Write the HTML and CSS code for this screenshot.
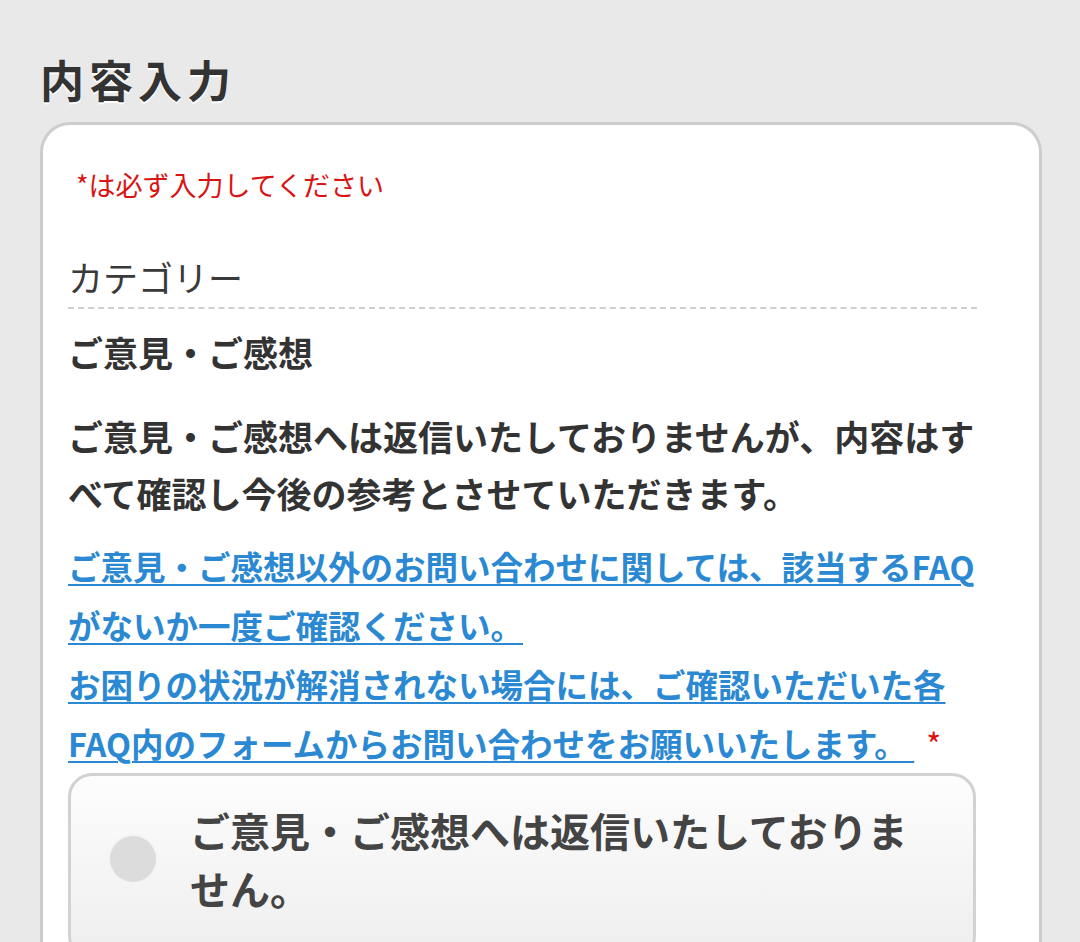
FILE: index.html
```html
<!DOCTYPE html>
<html lang="ja">
<head>
<meta charset="utf-8">
<title>内容入力</title>
<link rel="stylesheet" href="styles.css">
</head>
<body>
<div class="page">
  <h1 class="page-title">内容入力</h1>
  <div class="card">
    <p class="required-note">*は必ず入力してください</p>
    <div class="field-label">カテゴリー</div>
    <div class="field-value">ご意見・ご感想</div>
    <p class="notice">ご意見・ご感想へは返信いたしておりませんが、内容はすべて確認し今後の参考とさせていただきます。</p>
    <p class="links"><a href="#" class="link">ご意見・ご感想以外のお問い合わせに関しては、該当するFAQがないか一度ご確認ください。 </a><br><a href="#" class="link">お困りの状況が解消されない場合には、ご確認いただいた各FAQ内のフォームからお問い合わせをお願いいたします。 </a><span class="req">*</span></p>
    <label class="radio-box">
      <span class="radio-dot"></span>
      <span class="radio-text">ご意見・ご感想へは返信いたしておりません。</span>
    </label>
  </div>
</div>
</body>
</html>
```

FILE: styles.css
```css
html, body {
  margin: 0;
  padding: 0;
}
body {
  background: #e9e9e9;
  font-family: "Noto Sans CJK JP", "Noto Sans", sans-serif;
  color: #333;
  overflow: hidden;
}
.page {
  padding: 54px 38px 0 40px;
}
.page-title {
  margin: 0 0 17px 0;
  font-size: 44px;
  line-height: 51px;
  font-weight: 700;
  letter-spacing: 5px;
  color: #333;
  text-shadow: 0 2px 0 #fff;
}
.card {
  background: #fff;
  border: 3px solid #cdcdcd;
  border-bottom: none;
  border-radius: 30px 30px 0 0;
  padding: 42px 60px 40px 25px;
  min-height: 800px;
}
.required-note {
  margin: 0;
  padding-left: 8px;
  font-size: 27px;
  line-height: 36px;
  color: #d81414;
}
.field-label {
  margin-top: 52px;
  margin-right: 2px;
  padding-bottom: 8px;
  border-bottom: 2px dashed #cfcfcf;
  font-size: 35px;
  line-height: 44px;
  color: #3a3a3a;
}
.field-value {
  margin-top: 21px;
  font-size: 35px;
  line-height: 44px;
  font-weight: 700;
  color: #333;
}
.notice {
  margin: 33px 0 0 0;
  font-size: 35px;
  line-height: 57px;
  font-weight: 700;
  color: #333;
}
.links {
  margin: 15px 0 0 0;
  font-size: 32.5px;
  line-height: 59px;
  font-weight: 700;
}
.link {
  color: #2a89d2;
  text-decoration: underline;
  text-underline-offset: 4px;
  text-decoration-thickness: 2px;
}
.req {
  color: #e01010;
  font-weight: 400;
  font-size: 32px;
  line-height: 1;
  margin-left: 12px;
}
.radio-box {
  display: flex;
  align-items: center;
  gap: 34px;
  margin: 1px 3px 0 0;
  padding: 25px 40px 40px 39px;
  border: 3px solid #d2d2d2;
  border-radius: 24px;
  background: linear-gradient(#fdfdfd, #eeeeee);
}
.radio-dot {
  flex: none;
  width: 46px;
  height: 46px;
  border-radius: 50%;
  background: #dcdcdc;
  box-shadow: 0 0 0 2px #f4f4f4;
}
.radio-text {
  font-size: 40px;
  line-height: 58px;
  font-weight: 700;
  color: #444;
}
```
